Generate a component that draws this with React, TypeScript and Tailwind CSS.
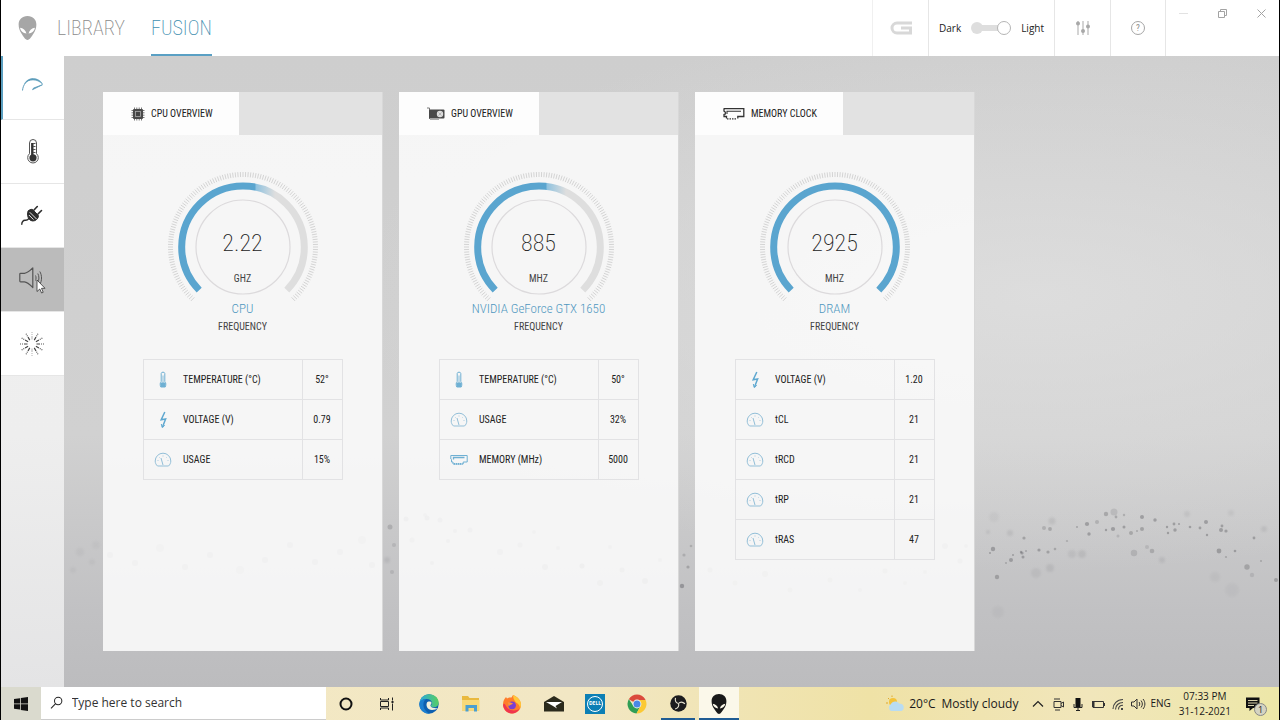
import React from "react";

const ACCENT = "#5aa5cf";

function AlienHead({ className }: { className: string }) {
  return (
    <svg viewBox="0 0 18 23" className={className} fill="currentColor" aria-hidden="true">
      <path
        fillRule="evenodd"
        d="M9 0C3.800 0 .5 3.400.5 8.200c0 3.200 1 6 2.700 8.600C4.900 19.500 7 23 9 23s4.100-3.500 5.800-6.200c1.700-2.600 2.700-5.400 2.700-8.600C17.500 3.400 14.200 0 9 0ZM1.800 11.200c3 .4 5.400 2.200 6.200 5.500-3.400-.2-5.600-2.300-6.200-5.500Zm14.400 0c-.6 3.200-2.800 5.300-6.200 5.500.8-3.300 3.200-5.100 6.200-5.500Z"
      />
    </svg>
  );
}

function Gauge({ id, from }: { id: string; from: number | null }) {
  const ticks: React.ReactNode[] = [];
  for (let a = -136; a <= 136; a += 2) {
    const r = (a * Math.PI) / 180;
    const s = Math.sin(r);
    const c = -Math.cos(r);
    ticks.push(
      <line key={a} x1={80 + 70 * s} y1={80 + 70 * c} x2={80 + 75 * s} y2={80 + 75 * c} />
    );
  }
  const arc = "M36.200 123.100A61.300 61.300 0 1 1 123.800 123.100";
  return (
    <svg viewBox="0 0 160 140" className="h-[140px] w-40" fill="none" aria-hidden="true">
      {from !== null && (
        <defs>
          <linearGradient id={id} gradientUnits="userSpaceOnUse" x1={from} x2={from + 20} y1="0" y2="0">
            <stop offset="0" stopColor={ACCENT} />
            <stop offset="0.050" stopColor="#8fc2df" />
            <stop offset="1" stopColor="#dedede" />
          </linearGradient>
        </defs>
      )}
      <g stroke="#d4d4d4" strokeWidth="1">{ticks}</g>
      <path d={arc} stroke={from === null ? ACCENT : `url(#${id})`} strokeWidth="7" />
      <circle cx="80" cy="80" r="47" stroke="#dcdadc" strokeWidth="1.200" />
    </svg>
  );
}

type IconName = "temp" | "volt" | "dial" | "mem";

function RowIcon({ name }: { name: IconName }) {
  const box = "mx-auto h-[18px] w-[18px]";
  if (name === "temp")
    return (
      <svg viewBox="0 0 18 18" className={box} aria-hidden="true" fill="none" stroke="#6fb0d3">
        <path d="M7.200 10.500V2.500c0-1.800 3.600-1.800 3.600 0v8c1.300 1 1.300 3.800.4 5.500H6.800c-.9-1.700-.9-4.500.4-5.500Z" />
        <path d="M9 4.500V12" strokeWidth=".8" />
        <path d="M7 12h4v3.500H7Z" fill="#6fb0d3" />
      </svg>
    );
  if (name === "volt")
    return (
      <svg viewBox="0 0 18 18" className={box} aria-hidden="true" fill="none" stroke="#5fa8d0" strokeWidth="1.500">
        <path d="M10.800 1 7.200 8.800l4.400-.9-3.200 8.300" />
        <path d="m7.300 13 .9 3.500 2.600-2.200" strokeWidth="1" />
      </svg>
    );
  if (name === "dial")
    return (
      <svg viewBox="0 0 18 18" className={box} aria-hidden="true" fill="none" stroke="#93bfd8">
        <path d="M4 15h10.500c1.500-1.300 2.300-3 2.300-5A7.800 7.800 0 0 0 1.200 10c0 2 .8 3.700 2.300 5Z" />
        <path d="m7 7 2 7" />
        <path d="M3.500 9.500h1M9 4.500v1M13.500 9.500h1M5 6l.6.6M13 6l-.6.6" strokeWidth=".7" />
      </svg>
    );
  return (
    <svg viewBox="0 0 18 18" className={box} aria-hidden="true" fill="none" stroke="#6fb0d3">
      <path d="M.8 4.500h16.400v6.500h-4v2H3v-2H1.500V8.500L.8 8Z" />
      <path d="M3.500 8.500v-2h11" strokeWidth="1.300" />
      <path d="M4 12.800h8.500" strokeDasharray="1 1" strokeWidth="1.800" />
    </svg>
  );
}

function CpuIcon() {
  return (
    <svg viewBox="0 0 14 14" className="h-[14px] w-[14px]" aria-hidden="true" fill="none">
      <path d="M3.500.5v13M5.800.5v13M8.200.5v13M10.500.5v13M.5 3.500h13M.5 5.800h13M.5 8.200h13M.5 10.500h13" stroke="#777" />
      <rect x="2" y="2" width="10" height="10" rx="1" fill="#4a4a4a" />
      <rect x="4.500" y="4.500" width="5" height="5" fill="#444" stroke="#aaa" strokeWidth=".8" />
    </svg>
  );
}

function GpuIcon() {
  return (
    <svg viewBox="0 0 18 14" className="h-[14px] w-[18px]" aria-hidden="true">
      <path d="M0 1h2.500v11" fill="none" stroke="#777" />
      <rect x="2" y="2.500" width="15.500" height="9" rx="1" fill="#484848" />
      <path d="M3 12.500h9" stroke="#aaa" />
      <circle cx="13" cy="7" r="3.200" fill="#ddd" />
      <path d="m11.500 5.500 3 3m0-3-3 3" stroke="#999" strokeWidth=".6" />
    </svg>
  );
}

function RamIcon() {
  return (
    <svg viewBox="0 0 22 14" className="h-[14px] w-[22px]" aria-hidden="true" fill="none" stroke="#333" strokeWidth="1.300">
      <path d="M1 1.700h19.800v7.800h-6v2M1 1.200v3l1.300.8v2L1 7.500v2h2.500v2" />
      <path d="M4 7V4.200h14" strokeWidth="1.100" />
      <path d="M4 11.800h9.500" strokeDasharray="1.500 1" />
    </svg>
  );
}

type Card = {
  id: string;
  title: string;
  icon: React.ReactNode;
  value: string;
  unit: string;
  name: string;
  from: number | null;
  rows: [IconName, string, string][];
};

const cards: Card[] = [
  {
    id: "cpu",
    title: "CPU OVERVIEW",
    icon: <CpuIcon />,
    value: "2.22",
    unit: "GHZ",
    name: "CPU",
    from: 92,
    rows: [
      ["temp", "TEMPERATURE (°C)", "52°"],
      ["volt", "VOLTAGE (V)", "0.79"],
      ["dial", "USAGE", "15%"],
    ],
  },
  {
    id: "gpu",
    title: "GPU OVERVIEW",
    icon: <GpuIcon />,
    value: "885",
    unit: "MHZ",
    name: "NVIDIA GeForce GTX 1650",
    from: 87,
    rows: [
      ["temp", "TEMPERATURE (°C)", "50°"],
      ["dial", "USAGE", "32%"],
      ["mem", "MEMORY (MHz)", "5000"],
    ],
  },
  {
    id: "mem",
    title: "MEMORY CLOCK",
    icon: <RamIcon />,
    value: "2925",
    unit: "MHZ",
    name: "DRAM",
    from: null,
    rows: [
      ["volt", "VOLTAGE (V)", "1.20"],
      ["dial", "tCL", "21"],
      ["dial", "tRCD", "21"],
      ["dial", "tRP", "21"],
      ["dial", "tRAS", "47"],
    ],
  },
];

function OverviewCard({ card }: { card: Card }) {
  return (
    <section className="max-w-[280px] flex-1 border-r border-[#d8d8d8] bg-[#fafafa]/90">
      <header className="flex h-[43px] bg-[#e2e2e2]">
        <h2 className="flex items-center gap-1.5 bg-[#fdfdfd] pr-[26px] pl-7 text-[10px] text-[#222]">
          {card.icon}
          {card.title}
        </h2>
      </header>
      <div className="flex flex-col items-center pt-8">
        <div className="grid">
          <div className="col-start-1 row-start-1">
            <Gauge id={card.id} from={card.from} />
          </div>
          <div className="col-start-1 row-start-1 flex flex-col items-center pt-16">
            <span className="text-[24px] leading-6 font-extralight text-[#222]">{card.value}</span>
            <span className="pt-4 text-[10px] leading-4 text-[#444]">{card.unit}</span>
          </div>
        </div>
        <p className="-mt-2 text-[13px] leading-5 font-light text-[#4f97bf]">{card.name}</p>
        <p className="text-[10px] leading-4 text-[#444]">FREQUENCY</p>
        <table className="mt-6 w-[200px] table-fixed border-collapse text-[10px] text-[#222]">
          <tbody>
            {card.rows.map(([icon, label, value]) => (
              <tr key={label} className="h-10 border border-[#e2e2e4]">
                <td className="w-10">
                  <RowIcon name={icon} />
                </td>
                <th scope="row" className="text-left font-normal">
                  {label}
                </th>
                <td className="w-10 border-l border-[#e2e2e4] text-center">{value}</td>
              </tr>
            ))}
          </tbody>
        </table>
      </div>
    </section>
  );
}

/* Particles drifting over the backdrop: x, y, radius, opacity. */
const particles: [number, number, number, number][] = [
  [993, 549, 2.2, 0.5], [990, 553, 1, 0.5], [997, 577, 2.2, 0.45], [1011, 560, 2, 0.5],
  [1006, 563, 1, 0.4], [1013, 555, 1, 0.5], [1022, 553, 1.6, 0.5], [1023, 557, 1.5, 0.5],
  [1024, 538, 1.6, 0.45], [1021, 552, 1.2, 0.5], [1026, 551, 1, 0.4], [1039, 550, 1.6, 0.5],
  [1048, 552, 1.6, 0.45], [1044, 528, 2, 0.3], [1050, 529, 1.9, 0.4], [1052, 521, 3.5, 0.15],
  [1055, 549, 1.3, 0.4], [1067, 541, 1.1, 0.35], [1077, 527, 1, 0.45], [1087, 524, 2.1, 0.5],
  [1089, 534, 1.7, 0.5], [1097, 522, 2, 0.3], [1106, 514, 2.2, 0.4], [1114, 512, 3.5, 0.2],
  [1116, 517, 1.4, 0.4], [1124, 515, 1.2, 0.35], [1106, 530, 1.2, 0.5], [1113, 529, 2.1, 0.5],
  [1124, 527, 1.5, 0.5], [1118, 536, 1.5, 0.25], [1131, 533, 2, 0.4], [1137, 531, 1, 0.4],
  [1142, 529, 2, 0.45], [1142, 517, 2, 0.5], [1155, 520, 1.7, 0.5], [1167, 527, 1.2, 0.5],
  [1168, 533, 1.2, 0.5], [1174, 524, 1.4, 0.5], [1175, 530, 1.7, 0.5], [1179, 524, 1, 0.5],
  [1190, 527, 1.3, 0.5], [1200, 528, 1.4, 0.5], [1206, 522, 2, 0.5], [1207, 535, 1.2, 0.5],
  [1221, 530, 2, 0.5], [1222, 526, 1.4, 0.5], [1226, 531, 1.6, 0.5], [1219, 551, 2.4, 0.5],
  [1226, 557, 1.1, 0.4], [1235, 551, 1.3, 0.5], [1247, 567, 2.7, 0.4], [1252, 575, 2.2, 0.2],
  [1254, 538, 1.4, 0.5], [1261, 561, 1, 0.4], [1276, 580, 2, 0.45], [1134, 553, 3.2, 0.25],
  [1152, 551, 2.3, 0.35], [1147, 547, 2, 0.2], [1162, 560, 3, 0.15], [1082, 554, 4, 0.15],
  [1072, 554, 4, 0.12], [1050, 568, 4, 0.14], [1036, 573, 5, 0.1], [1010, 533, 3, 0.15],
  [988, 532, 2, 0.15], [998, 612, 6, 0.06], [1232, 590, 7, 0.06], [1215, 577, 5, 0.07],
  [1264, 529, 3, 0.14], [1187, 514, 3, 0.12], [1231, 513, 3, 0.1], [994, 517, 5, 0.07],
  [682, 586, 2.2, 0.55], [688, 567, 1.6, 0.4], [691, 546, 1.3, 0.3], [684, 555, 1.6, 0.3],
  [390, 527, 2.5, 0.3], [394, 545, 2, 0.2], [387, 560, 3, 0.15], [392, 572, 2, 0.2],
  [440, 520, 2.5, 0.5], [455, 531, 2, 0.5], [412, 540, 2.5, 0.4], [425, 515, 2, 0.4],
  [406, 519, 2.5, 0.6], [427, 518, 2.5, 0.6], [448, 541, 2, 0.5], [432, 563, 2, 0.5],
  [470, 530, 2.5, 0.5], [500, 552, 3, 0.4], [520, 545, 2.5, 0.4], [545, 567, 3, 0.5],
  [582, 566, 2.5, 0.7], [600, 583, 3, 0.5], [622, 570, 2.5, 0.5], [645, 581, 3, 0.6],
  [558, 548, 2, 0.4], [534, 532, 2, 0.4], [610, 547, 2, 0.4], [660, 560, 2, 0.4],
  [110, 555, 3, 0.4], [135, 563, 3, 0.4], [160, 548, 4, 0.3], [185, 567, 3, 0.4],
  [210, 555, 3, 0.4], [240, 570, 4, 0.3], [265, 560, 3, 0.4], [290, 545, 3, 0.4],
  [315, 562, 3, 0.4], [340, 552, 3, 0.4], [362, 540, 4, 0.3], [372, 565, 3, 0.4],
  [710, 570, 2.5, 0.4], [735, 583, 2.5, 0.4], [765, 574, 3, 0.4], [790, 590, 2.5, 0.4],
  [830, 580, 2.5, 0.4], [860, 590, 2, 0.4], [885, 571, 2.5, 0.4], [905, 583, 2, 0.4],
  [925, 572, 2, 0.4], [945, 546, 3, 0.4], [960, 561, 2.5, 0.4], [966, 546, 2, 0.4],
  [80, 552, 4, 0.07], [92, 562, 3, 0.07], [73, 570, 3, 0.07], [96, 545, 4, 0.06],
];

function Backdrop() {
  return (
    <svg
      viewBox="64 56 1215 631"
      preserveAspectRatio="none"
      className="absolute inset-0 h-full w-full"
      aria-hidden="true"
    >
      <defs>
        <filter id="haze" x="-1" y="-1" width="3" height="3">
          <feGaussianBlur stdDeviation="1.2" />
        </filter>
      </defs>
      {particles.map(([x, y, r, o]) => (
        <circle
          key={`${x}-${y}`}
          cx={x}
          cy={y}
          r={r}
          fill="#707074"
          opacity={o}
          filter={o < 0.2 ? "url(#haze)" : undefined}
        />
      ))}
    </svg>
  );
}

const sideItems: { label: string; className: string; icon: React.ReactNode }[] = [
  {
    label: "Overview",
    className: "border-l-2 border-l-[#5b9fc0] bg-white pr-0.5 pb-1.5",
    icon: (
      <svg viewBox="0 0 24 24" className="size-6" fill="none" stroke="#5d9dbb">
        <path d="M1.500 17.500C2 11.500 6 6.500 12 6" strokeWidth="1" />
        <path d="M3.500 10.500C5.500 7.300 8.500 5.500 12 5.500c4 0 7.800 2 9.500 5.500C18.500 8.300 15.500 7 12 7c-3.500 0-6.500 1.200-8.500 3.500Z" fill="#5d9dbb" strokeWidth=".5" />
        <path d="m11.500 16.700 10-5-9 3.400Z" strokeWidth=".8" fill="#5d9dbb" />
      </svg>
    ),
  },
  {
    label: "Thermal",
    className: "bg-white",
    icon: (
      <svg viewBox="0 0 24 26" className="h-[26px] w-6" fill="none" stroke="#555">
        <path d="M8.500 14.700V4a3.500 3.500 0 0 1 7 0v10.700a5.300 5.300 0 1 1-7 0Z" />
        <circle cx="12" cy="18.800" r="3.600" fill="#333" stroke="none" />
        <path d="M11.300 4v13" strokeWidth="2.400" stroke="#333" />
        <path d="M12 4.500h2.500M12 7.500h2.500M12 10.500h2.500M12 13.500h2.500" />
      </svg>
    ),
  },
  {
    label: "Power",
    className: "bg-white pr-0.5",
    icon: (
      <svg viewBox="0 0 24 24" className="size-6" fill="none" stroke="#2e2e2e" strokeLinecap="round">
        <path d="M9.200 7.500c2.200-2.200 4.200-1.700 4.500-1.400l5.600 5.800c.5.600-.2 3.200-2.300 4.600-2.300 1.500-4.800 1.200-6.600-.6-1.900-2-2.600-5.800-1.200-8.400Z" fill="#2e2e2e" transform="translate(-1 -.5)" />
        <path d="m10 8.500 6.500 6.500M9.200 11.300l4 4" stroke="#e8e8e8" strokeWidth="1" />
        <path d="M14 6 17.300 2.500M18 10 21.500 6.500" strokeWidth="1.600" />
        <path d="M9 14.500c-2 2.200-2.300 1.800-4 1.800-1.800 0-3.300 1.700-3.200 4" strokeWidth="1.400" />
      </svg>
    ),
  },
  {
    label: "Audio",
    className: "bg-[#bbbbbb] pr-1 pb-1",
    icon: (
      <svg viewBox="0 0 24 24" className="size-6" fill="none" stroke="#555" strokeWidth="1.200" strokeLinejoin="round">
        <path d="M.8 8v7c0 .6.3.800.8.800h3.800c3.500.4 6 3.200 8.400 5.700V1.800C11.500 4.200 9 7 5.500 7.300H1.600c-.5 0-.8.300-.8.700Z" />
        <path d="M16.500 9.500c.7 1.500.7 3.500 0 5M18.800 7.500c1.500 2.500 1.500 6.500 0 9M20.800 5.500c2.300 3.800 2.300 9.200 0 13" strokeWidth="1" />
      </svg>
    ),
  },
  {
    label: "Lighting",
    className: "bg-white pr-0.5",
    icon: (
      <svg viewBox="-12 -12 24 24" className="size-6" fill="none" stroke="#444" strokeWidth="1.200">
        {Array.from({ length: 12 }, (_, i) => (
          <path
            key={i}
            d="M0-4.500v-3.500M0-9v-.9M0-11v-.9"
            transform={`rotate(${i * 30})`}
            opacity={i % 6 === 0 ? 0.35 : 1}
          />
        ))}
      </svg>
    ),
  },
];

function TaskApps() {
  return (
    <div className="flex h-full items-center">
      <button aria-label="Cortana" className="grid h-full w-10 place-items-center">
        <svg viewBox="0 0 16 16" className="size-4" fill="none" stroke="#111" strokeWidth="2">
          <circle cx="8" cy="8" r="5.500" />
        </svg>
      </button>
      <button aria-label="Task View" className="grid h-full w-[42px] place-items-center">
        <svg viewBox="0 0 16 16" className="size-4" fill="none" stroke="#222">
          <path d="M1.500 2v2h8V2M1.500 14v-2h8v2M1.500 5.500v5h8v-5ZM13.500 1.500v3M13.500 7.500v7" />
          <path d="M12.500 5h2v2h-2Z" fill="#222" stroke="none" />
        </svg>
      </button>
      <button aria-label="Edge" className="grid h-full w-[42px] place-items-center">
        <svg viewBox="0 0 20 20" className="size-5">
          <defs>
            <linearGradient id="edge-top" x1="0" x2="1" y1=".3" y2=".2">
              <stop offset="0" stopColor="#2aa8e0" />
              <stop offset="1" stopColor="#58cf5c" />
            </linearGradient>
          </defs>
          <circle cx="10" cy="10" r="9.700" fill="#0d5fb0" />
          <path d="M.3 10C1 4 5 .3 10 .3c5.600 0 9.700 4 9.700 8.200 0 3-2 4.800-4.700 4.800-2.500 0-3.500-1-3-2 .5-.8 1-1.300.8-2.800C12.500 6.500 10.500 5 7.500 5 4 5 1 7 .3 10Z" fill="url(#edge-top)" />
          <path d="M8 8.500c-1.500 3 .5 7.500 5 7.500 2.500 0 4.500-1 6.300-2-1.800.3-6.300.5-7.600-1.700-.8-1.300.8-2 .8-3.500C12.500 7.300 9 6.800 8 8.500Z" fill="#f1efdc" />
          <path d="M.3 10C1 6.500 4 5 7.500 5 5 6 4 9 4.500 12c.5 3.300 3 6.500 6.500 7.600C5 20.200.3 16 .3 10Z" fill="#1c7fd0" />
        </svg>
      </button>
      <button aria-label="File Explorer" className="grid h-full w-[41px] place-items-center">
        <svg viewBox="0 0 20 20" className="size-5">
          <path d="M1 2h6l1.500 2H18v12.500H1Z" fill="#e9b93f" />
          <path d="M1 6h17.500v10.500H1Z" fill="#f8d978" />
          <path d="M4.500 11h11.500v6.500h-3V14H7.500v3.500h-3Z" fill="#4b9fd0" />
        </svg>
      </button>
      <button aria-label="Firefox" className="grid h-full w-[42px] place-items-center">
        <svg viewBox="0 0 20 20" className="size-5">
          <path d="M2.500 5 4 3l1 1.500C6.500 3.500 8 3.300 9.500 3.500L11 1c3 1 7.500 4 8 9.500.3 5-4 9-9 9s-9-4-9-8.700C1 8.500 1.500 6.500 2.500 5Z" fill="#ff7c2b" />
          <path d="M11 1c4 1.500 8 5 8 9.500 0 1.500-.5 3-1 4 0-3-2-5-4-6C12 6 11 4 11 1Z" fill="#ffc83a" />
          <path d="M1 11c1 5 4.500 8.500 9 8.500 3 0 6-2 7.500-4.500-3 2-9.500 2-12-1S2.500 8 1 11Z" fill="#f0354f" />
          <circle cx="10" cy="11.300" r="3.900" fill="#7a3fd0" />
          <path d="M6 8.500c2-.5 3 .5 5 .8-1 1.700-3.300 1.500-4.600 3.200Z" fill="#ff9634" />
        </svg>
      </button>
      <button aria-label="Mail" className="grid h-full w-[41px] place-items-center">
        <svg viewBox="0 0 20 20" className="size-5">
          <path d="M0 8 10 2l10 6v9.500H0Z" fill="#2b2a1c" />
          <path d="M2 8h16l-6.500 4L13 14.500 9 12Z" fill="#fff" />
        </svg>
      </button>
      <button aria-label="Dell" className="grid h-full w-[42px] place-items-center">
        <span className="grid size-5 place-items-center bg-[#0c7fb5]">
          <span className="grid size-4 place-items-center rounded-full border border-white text-[5px] font-bold text-white">
            DELL
          </span>
        </span>
      </button>
      <button aria-label="Chrome" className="grid h-full w-[41px] place-items-center">
        <svg viewBox="0 0 20 20" className="size-5">
          <path d="M10 10 1.800 5.200A9.500 9.500 0 0 1 18.200 5.200L18.500 6H10Z" fill="#db4a3c" />
          <path d="M10 10 13.500 12 9.500 19.500A9.500 9.500 0 0 1 1.800 5.200L6.500 12Z" fill="#2f9e55" />
          <path d="M10 6h8.600A9.500 9.500 0 0 1 9.500 19.500L13.500 12Z" fill="#fbc934" />
          <circle cx="10" cy="10" r="4.400" fill="#f5f5f0" />
          <circle cx="10" cy="10" r="3.500" fill="#4a88e8" />
        </svg>
      </button>
      <button aria-label="OBS Studio" className="mx-1 grid h-full w-[34px] place-items-center border-b-2 border-[#1f5c94] pt-0.5">
        <svg viewBox="0 0 18 18" className="size-[17px]">
          <circle cx="9" cy="9" r="8.700" fill="#1c1c1e" />
          <g fill="none" stroke="#e6e2d0" strokeWidth="1.200">
            <path d="M9 9C6.500 8.500 5 6.500 5.800 3" />
            <path d="M9 9C6.500 8.500 5 6.500 5.800 3" transform="rotate(120 9 9)" />
            <path d="M9 9C6.500 8.500 5 6.500 5.800 3" transform="rotate(240 9 9)" />
          </g>
        </svg>
      </button>
      <button aria-label="Alienware Command Center" className="grid h-full w-10 place-items-center border-b-2 border-[#1f5c94] bg-[#fbf8ea] pt-0.5">
        <AlienHead className="h-5 w-4 text-[#191919]" />
      </button>
    </div>
  );
}

function Tray() {
  const icon = "size-4 shrink-0";
  return (
    <div className="flex h-full items-center text-[12px] text-[#1a1a1a]">
      <svg viewBox="0 0 20 20" className="mr-1 size-5" aria-hidden="true">
        <circle cx="8" cy="8" r="4" fill="#f4c33a" />
        <path d="M1 9h2M3 4l1.200 1.200M7 1.500V3" stroke="#e0a828" />
        <path d="M6 17a4 4 0 0 1 0-7c1-3 6-3.500 8-.5 4 0 5.500 3 4.500 5.500-.7 1.500-1.500 2-3 2Z" fill="#b9dcf2" />
      </svg>
      <span className="mr-1.5">20°C</span>
      <span>Mostly cloudy</span>
      <div className="ml-3 flex items-center gap-1">
        <svg viewBox="0 0 16 16" className={icon} fill="none" stroke="#222" strokeWidth="1.200">
          <path d="m3 10.500 5-5 5 5" />
        </svg>
        <svg viewBox="0 0 16 16" className={icon} fill="none" stroke="#333">
          <path d="M4 5.500h7v6H4ZM11 7.500l2.500-1.500v5L11 9.500M4 3h6M5 14h5" />
        </svg>
        <svg viewBox="0 0 16 16" className={icon} fill="none" stroke="#222">
          <rect x="5.500" y="2" width="5" height="9" fill="#111" stroke="none" />
          <path d="M4 8v3.500h8V8M8 12v2.500M6 14.500h4" />
        </svg>
        <svg viewBox="0 0 16 16" className={icon} fill="none" stroke="#333">
          <path d="M3 5.500h10.500v6H3ZM14.500 7v3" />
          <path d="M2 5h2.500v6H2Z" fill="#333" stroke="none" />
        </svg>
        <svg viewBox="0 0 16 16" className={icon} fill="none" stroke="#444" strokeWidth="1.100">
          <path d="M3 13C3 8 7 3.500 13 3.500M5.500 13.500c0-4 3-7 7.500-7M8.500 13.500c0-2.500 2-4.200 4.500-4.200" />
          <path d="M11 12h2v2h-2Z" fill="#444" stroke="none" />
        </svg>
        <svg viewBox="0 0 16 16" className={icon} fill="none" stroke="#333">
          <path d="M1.500 6v4H4l3 3V3L4 6ZM9 6c1 1.200 1 2.800 0 4M11 4.500c1.800 2 1.800 5 0 7M13 3c2.500 3 2.500 7 0 10" />
        </svg>
      </div>
      <span className="ml-1 text-[10px]">ENG</span>
      <time className="ml-2 text-center text-[10px] leading-[15px]">
        07:33 PM
        <br />
        31-12-2021
      </time>
      <button aria-label="Notifications, 1 new" className="relative mr-3 ml-2 grid h-full w-7 place-items-center">
        <svg viewBox="0 0 16 16" className="size-4" aria-hidden="true">
          <path d="M1 1.500h13.500v10.500H8l-3.500 3V12H1Z" fill="#111" />
          <path d="M3 4.500h9.500M3 7h9.500M3 9.500h6" stroke="#f0e8bd" strokeWidth=".9" />
        </svg>
        <span className="absolute right-0 bottom-1 grid size-[13px] place-items-center rounded-full border border-[#888] bg-[#d5d3c2] text-[9px] leading-none">
          1
        </span>
      </button>
    </div>
  );
}

export default function App() {
  return (
    <div className="flex min-h-screen flex-col border-x border-black bg-white font-['Roboto_Condensed','Liberation_Sans',sans-serif]">
      <header className="flex h-14 justify-between bg-white">
        <div className="flex items-stretch">
          <AlienHead className="ml-[17px] h-6 w-[19px] self-center text-[#a6a6a6]" />
          <nav className="ml-5 flex gap-[26px] text-[20px] font-extralight">
            <a href="#library" className="flex items-center text-[#8a8a8a]">
              LIBRARY
            </a>
            <a href="#fusion" aria-current="page" className="flex items-center border-b-2 border-[#5aa0c4] pt-0.5 text-[#3f8fb0]">
              FUSION
            </a>
          </nav>
        </div>
        <div className="flex divide-x divide-[#e6e6e6] border-l border-[#f0f0f0]">
          <button aria-label="G Series" className="grid w-14 place-items-center">
            <svg viewBox="0 0 22 14" className="h-[14px] w-[22px]" fill="none" stroke="#d8d8d8" strokeWidth="3">
              <path d="M22 2H7a5 5 0 0 0 0 10h13.500V7H11" />
            </svg>
          </button>
          <label className="flex w-[126px] items-center justify-center gap-2.5 font-['Open_Sans',sans-serif] text-[10px] text-[#222]">
            Dark
            <input
              type="checkbox"
              role="switch"
              aria-label="Light theme"
              defaultChecked
              className="flex w-10 appearance-none items-center justify-between bg-[linear-gradient(#dedede,#dedede)] bg-[length:24px_6px] bg-center bg-no-repeat before:size-3 before:rounded-full before:bg-[#dedede] after:size-[14px] after:rounded-full after:border after:border-[#b5b5b5] after:bg-white"
            />
            Light
          </label>
          <button aria-label="Settings" className="grid w-14 place-items-center">
            <svg viewBox="0 0 16 16" className="size-4" fill="none" stroke="#b8b8b8" strokeWidth="1.200">
              <path d="M3 1v14M8 1v14M13 1v14" />
              <g fill="#a8a8a8" stroke="none">
                <circle cx="3" cy="3.500" r="2" />
                <circle cx="8" cy="11" r="2" />
                <circle cx="13" cy="6.500" r="2" />
              </g>
            </svg>
          </button>
          <button aria-label="Help" className="grid w-[55px] place-items-center">
            <span className="grid size-[14px] place-items-center rounded-full border border-[#a5a5a5] text-[9px] leading-none text-[#888]">
              ?
            </span>
          </button>
          <div className="flex h-full w-[113px] items-start justify-between px-3 pt-2">
            {[
              ["Minimize", "M1 5.500h9"],
              ["Restore", "M1.500 3.500h6v6h-6ZM3.500 3.500v-2h6v6h-2"],
              ["Close", "m1.500 1.500 8 8m0-8-8 8"],
            ].map(([label, d], i) => (
              <button key={label} aria-label={label}>
                <svg viewBox="0 0 11 11" className="size-[11px]" fill="none" stroke={i ? "#a3a3a3" : "#e2e2e2"}>
                  <path d={d} />
                </svg>
              </button>
            ))}
          </div>
        </div>
      </header>

      <div className="flex flex-1">
        <aside className="w-[63px] shrink-0 bg-[linear-gradient(#f0f0f0,#eeeeee_60%,#e4e4e5)]">
          <nav className="relative flex flex-col">
            {sideItems.map((item) => (
              <button
                key={item.label}
                aria-label={item.label}
                className={`grid h-16 place-items-center border-b border-b-[#e6e6e6] ${item.className}`}
              >
                {item.icon}
              </button>
            ))}
            <svg viewBox="0 0 10 15" className="absolute top-[223px] left-[35px] h-[15px] w-2.5" aria-hidden="true">
              <path d="M1 1v11.500l2.800-2.500L5.600 14l1.600-.7-1.700-4H9Z" fill="#fff" stroke="#333" strokeWidth=".8" />
            </svg>
          </nav>
        </aside>
        <main className="relative flex flex-1 bg-[radial-gradient(ellipse_at_80%_38%,rgba(224,224,224,0.8),rgba(224,224,224,0)_50%),linear-gradient(#cecece,#d1d1d1_60%,#c1c1c3_88%,#bcbcbe)] px-[39px] py-9">
          <Backdrop />
          <div className="relative flex flex-1 gap-4">
            {cards.map((card) => (
              <OverviewCard key={card.id} card={card} />
            ))}
          </div>
        </main>
      </div>

      <footer className="flex h-[33px] items-center justify-between bg-[linear-gradient(90deg,#eee3ae,#f3e8c3_15%,#f2e7c4_45%,#efe2a6_68%,#f1e6bb_85%,#ede7a8)] font-['Open_Sans',sans-serif]">
        <div className="flex h-full">
          <button aria-label="Start" className="grid h-full w-10 place-items-center bg-[#dadace]">
            <svg viewBox="0 0 14 14" className="size-[14px]" fill="#111">
              <path d="M0 2 6 1.200v5.300H0ZM6.800 1.100 14 0v6.500H6.800ZM0 7.300h6v5.300L0 11.800ZM6.800 7.300H14V14l-7.200-1.100Z" />
            </svg>
          </button>
          <label className="flex h-full w-[285px] items-center gap-2 border-b border-[#ccc] bg-white pl-2">
            <svg viewBox="0 0 16 16" className="size-4" fill="none" stroke="#222" strokeWidth="1.100" aria-hidden="true">
              <circle cx="10" cy="5.800" r="4" />
              <path d="M7.200 8.600 2.200 13.800" />
            </svg>
            <input
              type="text"
              aria-label="Search"
              placeholder="Type here to search"
              className="w-full bg-transparent text-[12px] outline-none placeholder:text-[#333]"
            />
          </label>
          <TaskApps />
        </div>
        <Tray />
      </footer>
    </div>
  );
}
